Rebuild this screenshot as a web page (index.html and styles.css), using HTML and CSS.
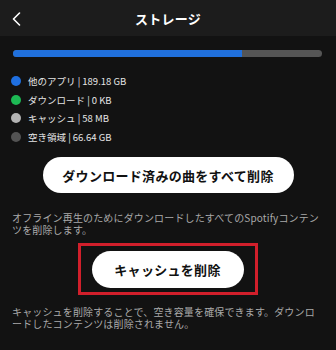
FILE: index.html
```html
<!DOCTYPE html>
<html lang="ja">
<head>
    <meta charset="UTF-8">
    <meta name="viewport" content="width=device-width, initial-scale=1.0">
    <title>ストレージ</title>
    <link rel="stylesheet" href="styles.css">
</head>
<body>

    <!-- Header -->
    <header class="top-bar">
        <span class="back">
            <svg width="9" height="14" viewBox="0 0 9 14"><path d="M7.5 1 L1.5 7 L7.5 13" fill="none" stroke="#fff" stroke-width="1.6" stroke-linecap="round" stroke-linejoin="round"/></svg>
        </span>
        <h1>ストレージ</h1>
        <span></span>
    </header>

    <div class="content">
        <div class="usage-bar">
            <div class="usage-fill" style="width: 74%;"></div>
        </div>

        <ul class="legend">
            <li><span class="dot blue"></span>他のアプリ | 189.18 GB</li>
            <li><span class="dot green"></span>ダウンロード | 0 KB</li>
            <li><span class="dot light"></span>キャッシュ | 58 MB</li>
            <li><span class="dot dark"></span>空き領域 | 66.64 GB</li>
        </ul>

        <div class="action">
            <button type="button" class="pill wide">ダウンロード済みの曲をすべて削除</button>
        </div>
        <p class="note">オフライン再生のためにダウンロードしたすべてのSpotifyコンテンツを削除します。</p>

        <div class="action">
            <div class="highlight">
                <button type="button" class="pill">キャッシュを削除</button>
            </div>
        </div>
        <p class="note second">キャッシュを削除することで、空き容量を確保できます。ダウンロードしたコンテンツは削除されません。</p>
    </div>

</body>
</html>
```

FILE: styles.css
```css
body {
    margin: 0;
    background-color: #121212;
    color: #fff;
    font-family: "Noto Sans CJK JP", "Noto Sans", sans-serif;
}

/* Header */
.top-bar {
    height: 36px;
    background-color: #1c1c1c;
    display: grid;
    grid-template-columns: 40px 1fr 40px;
    align-items: center;
}

.top-bar .back {
    display: flex;
    padding-left: 12px;
    padding-top: 1px;
}

.top-bar h1 {
    margin: 0;
    font-size: 13px;
    font-weight: 700;
    text-align: center;
    letter-spacing: 0.3px;
}

.content {
    padding: 0 12px;
}

/* Storage bar */
.usage-bar {
    margin: 14px 2px 0 1px;
    height: 7px;
    border-radius: 4px;
    background-color: #555;
    overflow: hidden;
}

.usage-fill {
    height: 100%;
    background-color: #2070dc;
}

/* Legend */
.legend {
    list-style: none;
    margin: 0;
    padding: 15px 0 0 0;
}

.legend li {
    height: 18.5px;
    display: flex;
    align-items: center;
    font-size: 9.5px;
    color: #e6e6e6;
}

.dot {
    width: 10px;
    height: 10px;
    border-radius: 50%;
    margin: 0 7px 0 -1px;
}

.dot.blue { background-color: #1f6fe0; }
.dot.green { background-color: #1db954; }
.dot.light { background-color: #b3b3b3; }
.dot.dark { background-color: #535353; }

/* Buttons */
.action {
    display: flex;
    justify-content: center;
    margin-top: 11px;
}

.pill {
    background-color: #fff;
    color: #111;
    border: none;
    border-radius: 19px;
    height: 37px;
    width: 152px;
    padding: 0;
    font-family: inherit;
    font-size: 13px;
    font-weight: 700;
    letter-spacing: 0.3px;
}

.pill.wide {
    width: 251px;
    height: 36px;
    border-radius: 18px;
}

.highlight {
    border: 3px solid #d11f2b;
    padding: 5px 11px 4px 11px;
    display: flex;
    margin-left: -1px;
}

.action:has(.highlight) {
    margin-top: 7px;
}

/* Notes */
.note {
    margin: 19px 0 0 0;
    font-size: 10px;
    line-height: 12px;
    letter-spacing: 0.15px;
    line-break: loose;
    color: #a9a9a9;
    text-align: left;
}

.note.second {
    margin-top: 11px;
}
```
